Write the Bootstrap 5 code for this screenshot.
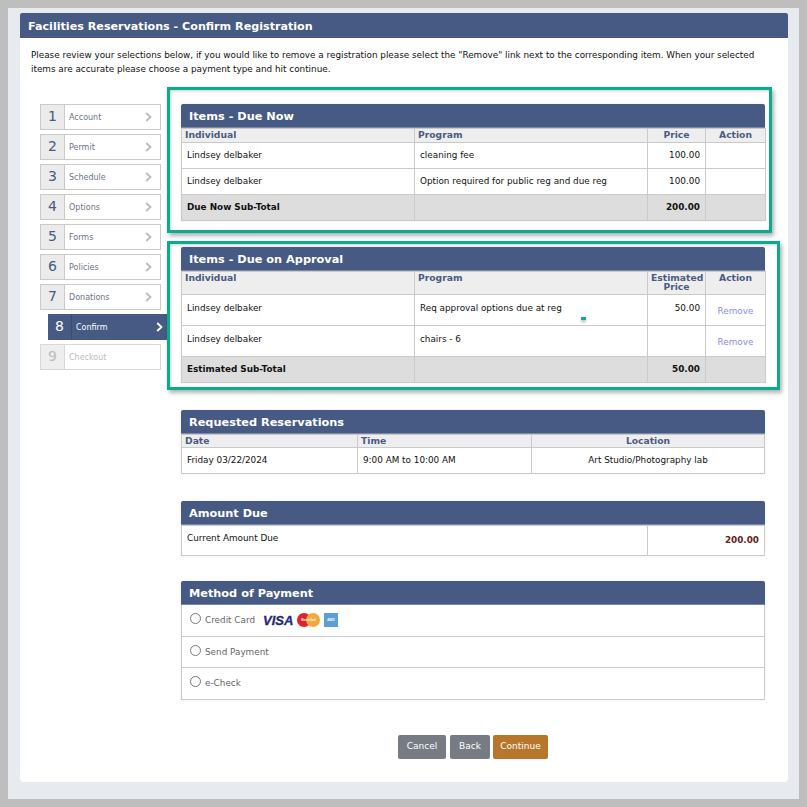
<!DOCTYPE html>
<html lang="en">
  <head>
    <meta charset="UTF-8" />
    <meta name="viewport" content="width=device-width, initial-scale=1.0" />
    <title>Facilities Reservations - Confirm Registration</title>
    <link href="https://cdn.jsdelivr.net/npm/bootstrap@5.3.2/dist/css/bootstrap.min.css" rel="stylesheet" />
    <style>
      html, body { height: 100%; }
      body { background: #bebebe; font-family: "DejaVu Sans", Verdana, sans-serif; font-size: 8.83px; color: #111; line-height: 1.2; }
      .page-frame { margin: 8px; height: 791px; background: #e7eaef; padding: 5px 11px 17px 12px; }
      .page-panel { height: 769px; background: #fff; border-radius: 0 0 4px 4px; }
      .page-title { height: 25px; background: #465a84; color: #fff; font-weight: 700; font-size: 11.15px; line-height: 27px; padding-left: 8px; border-radius: 2px 2px 0 0; }
      .page-intro { padding: 11px 0 0 11px; height: 66px; line-height: 13.5px; margin: 0; }
      .step-col { width: 147px; padding-left: 20px; flex: none; }
      .step-item { height: 26px; width: 121px; border: 1px solid #cacaca; margin-bottom: 4px; color: #6c7288; background: #fff; display: flex; }
      .step-num { width: 24px; flex: none; background: #ebebeb; border-right: 1px solid #cacaca; color: #465a84; font-size: 14px; text-align: center; line-height: 22px; }
      .step-name { flex: 1; font-size: 8px; padding: 7px 0 0 4px; line-height: 11px; }
      .step-arrow { width: 7px; height: 10px; margin: 7px 8px 0 0; color: #bbb; }
      .step-item.on { background: #465a84; border: 0; color: #fff; margin-left: 8px; width: 119px; margin-bottom: 4px; }
      .step-item.on .step-num { background: #465a84; color: #fff; border-right: 1px solid #3a4c72; line-height: 24px; }
      .step-item.on .step-name { padding-top: 8px; }
      .step-item.on .step-arrow { color: #fff; margin: 8px 4px 0 0; }
      .step-item.off { color: #bcbcbc; border-color: #d8d8d8; }
      .step-item.off .step-num { color: #bcbcbc; background: #eee; border-color: #d8d8d8; }
      .main-col { width: 584px; margin-left: 14px; flex: none; }
      .data-block { position: relative; box-shadow: 0 0 3px rgba(0,0,0,.08); }
      .block-head { height: 24px; background: #465a84; color: #fff; font-weight: 700; font-size: 11.3px; line-height: 25px; padding-left: 8px; border-radius: 2px 2px 0 0; border-bottom: 1px solid #7888a6; }
      .data-table { width: 584px; table-layout: fixed; border-collapse: collapse; margin: 0; }
      .data-table th, .data-table td { border: 1px solid #cacaca; vertical-align: top; }
      .data-table th { background: #eee; color: #4b5a82; font-weight: 700; font-size: 9.2px; padding: 1px 3px 3px; line-height: 9px; text-align: center; }
      .data-table th.head-left { text-align: left; }
      .data-table.short-head th { padding-bottom: 2px; }
      .data-table td { padding: 7px 5px 0 5px; }
      .data-table tr.tall-row td { height: 31px; padding-top: 8px; }
      .data-table tr.mid-row td { height: 26px; }
      .data-table tr.sum-row td { background: #ddd; height: 26px; font-weight: 700; }
      .cell-money { text-align: right; }
      .data-table tr.tall-row td.cell-link { text-align: center; padding-top: 11px; }
      .cell-link a { color: #8c8cf0; text-decoration: none; }
      .w-name { width: 233px; } .w-prog { width: 233px; } .w-price { width: 58px; } .w-act { width: 60px; }
      .w-date { width: 176px; } .w-time { width: 174px; }
      .w-label { width: 466px; }
      .due-table tr td { height: 30px; padding: 7px 5px 0 5px; }
      .due-table tr td.due-value { color: #6a2020; font-weight: 700; padding-top: 9px; }
      .gap-a { margin-top: 27px; }
      .gap-c { margin-top: 26px; }
      .gap-d { margin-top: 25px; }
      .pay-row { border: 1px solid #cacaca; border-top: 0; color: #666; display: flex; align-items: flex-start; padding: 8px 0 0 8px; gap: 4px; height: 31.5px; }
      .pay-row input { width: 11px; height: 11px; margin: 0; border: 1px solid #777; flex: none; }
      .pay-label { padding-top: 2px; }
      .visa-word { font-family: "Liberation Sans", sans-serif; font-weight: 700; font-style: italic; font-size: 13px; color: #1f2a78; line-height: 13px; -webkit-text-stroke: .3px #1f2a78; }
      .card-logos { display: flex; align-items: center; gap: 4px; margin-left: 4px; }
      .logo-tiny { font-family: "Liberation Sans", sans-serif; font-size: 2.6px; font-weight: 700; fill: #fff; }
      .page-actions { display: flex; justify-content: flex-start; gap: 4px; padding-left: 217px; margin-top: 35px; }
      .page-btn { height: 24px; font-size: 9px; padding: 0; color: #fff; background: #777b84; border: 0; border-radius: 2px; }
      .btn-cancel { width: 48px; } .btn-back { width: 40px; margin-right: -1px; }
      .btn-go { width: 55px; background: #b8762b; }
      .note-box { position: absolute; border: 3px solid #0aab8e; box-shadow: 2px 3px 4px rgba(0,0,0,.3), inset 1px 1px 3px rgba(0,0,0,.2); pointer-events: none; }
      .note-one { top: -17px; left: -14px; right: -7px; bottom: -12px; }
      .note-two { top: -6px; left: -14px; right: -15px; bottom: -7px; }
      .note-dot { position: absolute; left: 400px; top: 70px; width: 5px; height: 3px; background: #0aab8e; box-shadow: 0 2px 3px rgba(0,0,0,.3); }
    </style>
  </head>
  <body>
    <div class="page-frame">
      <div class="page-panel">
        <div class="page-title">Facilities Reservations - Confirm Registration</div>
        <p class="page-intro">Please review your selections below, if you would like to remove a registration please select the "Remove" link next to the corresponding item. When your selected<br />items are accurate please choose a payment type and hit continue.</p>
        <div class="d-flex">
          <div class="step-col">
            <div class="step-item"><div class="step-num">1</div><div class="step-name">Account</div><svg class="step-arrow" viewBox="0 0 7 10"><path d="M1.2 1 5.5 5 1.2 9" fill="none" stroke="currentColor" stroke-width="1.8" /></svg></div>
            <div class="step-item"><div class="step-num">2</div><div class="step-name">Permit</div><svg class="step-arrow" viewBox="0 0 7 10"><path d="M1.2 1 5.5 5 1.2 9" fill="none" stroke="currentColor" stroke-width="1.8" /></svg></div>
            <div class="step-item"><div class="step-num">3</div><div class="step-name">Schedule</div><svg class="step-arrow" viewBox="0 0 7 10"><path d="M1.2 1 5.5 5 1.2 9" fill="none" stroke="currentColor" stroke-width="1.8" /></svg></div>
            <div class="step-item"><div class="step-num">4</div><div class="step-name">Options</div><svg class="step-arrow" viewBox="0 0 7 10"><path d="M1.2 1 5.5 5 1.2 9" fill="none" stroke="currentColor" stroke-width="1.8" /></svg></div>
            <div class="step-item"><div class="step-num">5</div><div class="step-name">Forms</div><svg class="step-arrow" viewBox="0 0 7 10"><path d="M1.2 1 5.5 5 1.2 9" fill="none" stroke="currentColor" stroke-width="1.8" /></svg></div>
            <div class="step-item"><div class="step-num">6</div><div class="step-name">Policies</div><svg class="step-arrow" viewBox="0 0 7 10"><path d="M1.2 1 5.5 5 1.2 9" fill="none" stroke="currentColor" stroke-width="1.8" /></svg></div>
            <div class="step-item"><div class="step-num">7</div><div class="step-name">Donations</div><svg class="step-arrow" viewBox="0 0 7 10"><path d="M1.2 1 5.5 5 1.2 9" fill="none" stroke="currentColor" stroke-width="1.8" /></svg></div>
            <div class="step-item on"><div class="step-num">8</div><div class="step-name">Confirm</div><svg class="step-arrow" viewBox="0 0 7 10"><path d="M1.2 1 5.5 5 1.2 9" fill="none" stroke="currentColor" stroke-width="1.8" /></svg></div>
            <div class="step-item off"><div class="step-num">9</div><div class="step-name">Checkout</div></div>
          </div>
          <div class="main-col">
            <div class="data-block">
              <div class="block-head">Items - Due Now</div>
              <table class="data-table">
                <colgroup><col class="w-name" /><col class="w-prog" /><col class="w-price" /><col class="w-act" /></colgroup>
                <tr><th class="head-left">Individual</th><th class="head-left">Program</th><th>Price</th><th>Action</th></tr>
                <tr class="mid-row"><td>Lindsey delbaker</td><td>cleaning fee</td><td class="cell-money">100.00</td><td></td></tr>
                <tr class="mid-row"><td>Lindsey delbaker</td><td>Option required for public reg and due reg</td><td class="cell-money">100.00</td><td></td></tr>
                <tr class="sum-row"><td>Due Now Sub-Total</td><td></td><td class="cell-money">200.00</td><td></td></tr>
              </table>
              <div class="note-box note-one"></div>
            </div>
            <div class="data-block gap-c">
              <div class="block-head">Items - Due on Approval</div>
              <table class="data-table">
                <colgroup><col class="w-name" /><col class="w-prog" /><col class="w-price" /><col class="w-act" /></colgroup>
                <tr><th class="head-left">Individual</th><th class="head-left">Program</th><th>Estimated Price</th><th>Action</th></tr>
                <tr class="tall-row"><td>Lindsey delbaker</td><td>Req approval options due at reg</td><td class="cell-money">50.00</td><td class="cell-link"><a href="#">Remove</a></td></tr>
                <tr class="tall-row"><td>Lindsey delbaker</td><td>chairs - 6</td><td class="cell-money"></td><td class="cell-link"><a href="#">Remove</a></td></tr>
                <tr class="sum-row"><td>Estimated Sub-Total</td><td></td><td class="cell-money">50.00</td><td></td></tr>
              </table>
              <div class="note-box note-two"></div>
              <div class="note-dot"></div>
            </div>
            <div class="data-block gap-a">
              <div class="block-head">Requested Reservations</div>
              <table class="data-table short-head">
                <colgroup><col class="w-date" /><col class="w-time" /><col /></colgroup>
                <tr><th class="head-left">Date</th><th class="head-left">Time</th><th>Location</th></tr>
                <tr class="mid-row"><td>Friday 03/22/2024</td><td>9:00 AM to 10:00 AM</td><td class="text-center">Art Studio/Photography lab</td></tr>
              </table>
            </div>
            <div class="data-block gap-a">
              <div class="block-head">Amount Due</div>
              <table class="data-table due-table">
                <colgroup><col class="w-label" /><col /></colgroup>
                <tr><td>Current Amount Due</td><td class="cell-money due-value">200.00</td></tr>
              </table>
            </div>
            <div class="data-block gap-d">
              <div class="block-head">Method of Payment</div>
              <div class="pay-row">
                <input class="form-check-input" type="radio" name="pay" />
                <span class="pay-label">Credit Card</span>
                <span class="card-logos">
                  <span class="visa-word">VISA</span>
                  <svg width="23" height="14" viewBox="0 0 23 14"><circle cx="7" cy="7" r="7" fill="#e2212d" /><circle cx="16" cy="7" r="7" fill="#f0a93a" /><text class="logo-tiny" x="11.5" y="8" text-anchor="middle">MasterCard</text></svg>
                  <svg width="14" height="14" viewBox="0 0 14 14"><rect width="14" height="14" fill="#5a9fd8" /><text class="logo-tiny" x="7" y="8" text-anchor="middle">AMEX</text></svg>
                </span>
              </div>
              <div class="pay-row">
                <input class="form-check-input" type="radio" name="pay" />
                <span class="pay-label">Send Payment</span>
              </div>
              <div class="pay-row">
                <input class="form-check-input" type="radio" name="pay" />
                <span class="pay-label">e-Check</span>
              </div>
            </div>
            <div class="page-actions">
              <button class="btn page-btn btn-cancel" type="button">Cancel</button>
              <button class="btn page-btn btn-back" type="button">Back</button>
              <button class="btn page-btn btn-go" type="button">Continue</button>
            </div>
          </div>
        </div>
      </div>
    </div>
    <script src="https://cdn.jsdelivr.net/npm/bootstrap@5.3.2/dist/js/bootstrap.bundle.min.js"></script>
  </body>
</html>
